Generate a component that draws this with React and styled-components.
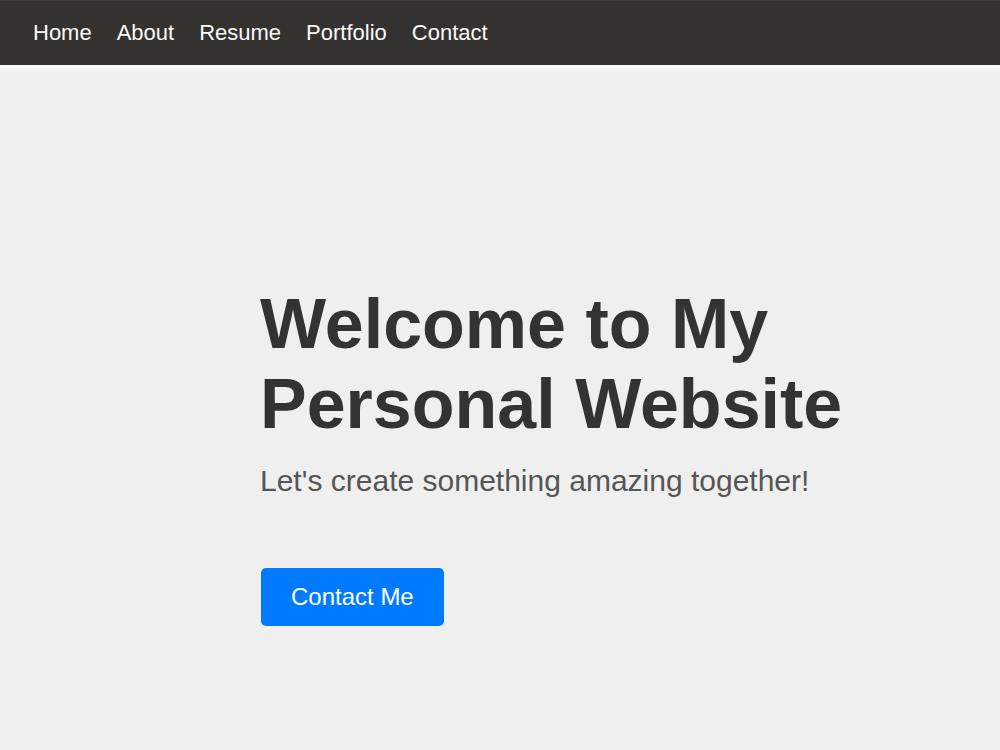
import React from 'react';
import styled, { createGlobalStyle } from 'styled-components';

const GlobalStyle = createGlobalStyle`
  html, body{
    margin: 0;
    padding: 0;
    background: #efefef;
    font-family: "Liberation Sans", Arial, sans-serif;
  }
  *{
    box-sizing: border-box;
  }
`;

const NavBar = styled.nav`
  display: flex;
  align-items: center;
  gap: 25px;
  height: 64px;
  padding: 0 33px;
  background: #333230;
  border-top: 1px solid #3d3c3a;
  border-bottom: 5px solid #f8f8f8;
  box-sizing: content-box;
`;

const NavLink = styled.a`
  color: #fafafa;
  font-size: 22px;
  text-decoration: none;
  line-height: 1;
  cursor: pointer;
  &:hover{
    color: #ddd;
  }
`;

const Hero = styled.section`
  display: flex;
  flex-direction: column;
  align-items: flex-start;
  padding: 214px 0 130px 260px;
`;

const Title = styled.h1`
  margin: 0 0 20px;
  max-width: 640px;
  font-size: 70px;
  font-weight: 700;
  line-height: normal;
  color: #333;
`;

const Subtitle = styled.p`
  margin: 0 0 70px;
  font-size: 30px;
  line-height: normal;
  color: #555;
`;

const Button = styled.a`
  display: inline-block;
  margin-left: 1px;
  padding: 15px 30px;
  font-size: 24px;
  line-height: normal;
  color: #fff;
  background: #007bff;
  border-radius: 5px;
  text-decoration: none;
  cursor: pointer;
  &:hover{
    background: #0069d9;
  }
`;

const links = ['Home', 'About', 'Resume', 'Portfolio', 'Contact'];

const App = () => {
  return (
    <>
      <GlobalStyle />
      <NavBar>
        {links.map(l => (
          <NavLink key={l} href={`#${l.toLowerCase()}`}>{l}</NavLink>
        ))}
      </NavBar>
      <Hero>
        <Title>Welcome to My Personal Website</Title>
        <Subtitle>Let's create something amazing together!</Subtitle>
        <Button href="#contact">Contact Me</Button>
      </Hero>
    </>
  );
};

export default App;
